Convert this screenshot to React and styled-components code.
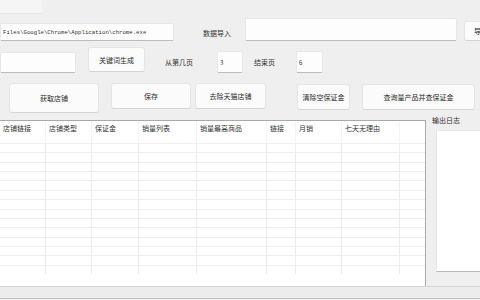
import styled, { createGlobalStyle } from "styled-components";

const Global = createGlobalStyle`
  html, body { margin: 0; padding: 0; background: #efefef; }
  body { font-family: "Noto Sans CJK SC", "Noto Sans", sans-serif; }
`;

const Window = styled.div`
  width: 480px;
  height: 300px;
  overflow: hidden;
  background: #efefef;
  color: #2a2a2a;
  font-size: 7px;
  position: relative;
`;

const TopStrip = styled.div`
  height: 13px;
  width: 42px;
  background: #f5f5f5;
  border-bottom: 1px solid #e6e6e6;
`;

const Row = styled.div`
  display: flex;
  align-items: ${({ align }) => align || "flex-start"};
  height: ${({ h }) => h}px;
  margin-top: ${({ mt }) => mt}px;
  white-space: nowrap;
`;

const Input = styled.div`
  flex: none;
  box-sizing: border-box;
  width: ${({ w }) => w}px;
  height: ${({ h }) => h}px;
  margin-left: ${({ ml }) => ml || 0}px;
  margin-top: ${({ mt }) => mt || 0}px;
  background: #fdfdfd;
  border: 1px solid #e8e8e8;
  border-bottom: 1px solid #bcbcbc;
  border-radius: 2px;
  display: flex;
  align-items: center;
  padding-left: 2px;
  overflow: hidden;
  font-size: 6px;
  color: #333;
`;

const PathText = styled.span`
  font-family: "Liberation Mono", "DejaVu Sans Mono", monospace;
  font-size: 5.7px;
  color: #333;
`;

const Label = styled.div`
  flex: none;
  width: ${({ w }) => w}px;
  margin-left: ${({ ml }) => ml || 0}px;
  margin-top: ${({ mt }) => mt || 0}px;
  font-size: 7px;
  line-height: 10px;
  color: #333;
  align-self: ${({ self }) => self || "auto"};
`;

const Button = styled.div`
  flex: none;
  box-sizing: border-box;
  width: ${({ w }) => w}px;
  height: ${({ h }) => h}px;
  margin-left: ${({ ml }) => ml || 0}px;
  margin-top: ${({ mt }) => mt || 0}px;
  background: #fbfbfb;
  border: 1px solid #e5e5e5;
  border-bottom-color: #d4d4d4;
  border-radius: 3px;
  display: flex;
  align-items: center;
  justify-content: center;
  font-size: 7px;
  color: #2a2a2a;
  overflow: hidden;
`;

const Bottom = styled.div`
  display: flex;
  align-items: flex-start;
  margin-top: 7px;
`;

const Table = styled.div`
  flex: none;
  box-sizing: border-box;
  width: 426px;
  height: 167px;
  background: #fff;
  border: 1px solid #a9a9a9;
  border-left: none;
  overflow: hidden;
`;

const HeadRow = styled.div`
  display: flex;
  height: 22px;
`;

const HeadCell = styled.div`
  flex: none;
  box-sizing: border-box;
  width: ${({ w }) => w}px;
  padding-left: 3px;
  line-height: 15px;
  font-size: 7px;
  color: #333;
  border-right: 1px solid #f3f3f3;
`;

const BodyRow = styled.div`
  display: flex;
  height: 9.36px;
  box-sizing: border-box;
  border-top: 1px solid #eeeeee;
`;

const Cell = styled.div`
  flex: none;
  box-sizing: border-box;
  width: ${({ w }) => w}px;
  border-right: 1px solid #ececec;
`;

const LogPanel = styled.div`
  flex: none;
  margin-left: 6px;
  display: flex;
  flex-direction: column;
`;

const LogLabel = styled.div`
  font-size: 7px;
  line-height: 8px;
  color: #333;
  margin-top: -4px;
`;

const LogBox = styled.div`
  margin-top: 6px;
  margin-left: 4px;
  width: 60px;
  height: 142px;
  box-sizing: border-box;
  background: #fff;
  border: 1px solid #e6e6e6;
  border-bottom: 1px solid #b9b9b9;
`;

const Footer = styled.div`
  position: absolute;
  left: 0;
  right: 0;
  top: 286px;
  height: 11px;
  background: #ececec;
  border-top: 1px solid #d6d6d6;
  border-bottom: 1px solid #c4c4c4;
`;

const cols = [46, 46, 47, 58, 70, 29, 46, 58, 26];
const headers = ["店铺链接", "店铺类型", "保证金", "销量列表", "销量最高商品", "链接", "月销", "七天无理由", ""];
const rows = Array.from({ length: 14 });

export default function App() {
  return (
    <Window>
      <Global />
      <TopStrip />
      <Row h={23} mt={4} align="flex-end">
        <Input w={174} h={18}>
          <PathText>Files\Google\Chrome\Application\chrome.exe</PathText>
        </Input>
        <Label w={42} ml={29} self="center" mt={6}>数据导入</Label>
        <Input w={212} h={23} />
        <Button w={34} h={20} ml={7}>导入</Button>
      </Row>

      <Row h={26} mt={6}>
        <Input w={76} h={21} mt={5} />
        <Button w={57} h={25} ml={12}>关键词生成</Button>
        <Label w={52} ml={20} mt={10}>从第几页</Label>
        <Input w={26} h={22} mt={4}>3</Input>
        <Label w={42} ml={11} mt={10}>结束页</Label>
        <Input w={27} h={22} mt={4}>6</Input>
      </Row>

      <Row h={30} mt={10}>
        <Button w={90} h={30} ml={9}>获取店铺</Button>
        <Button w={80} h={26} ml={12}>保存</Button>
        <Button w={71} h={26} ml={4}>去除天猫店铺</Button>
        <Button w={53} h={26} ml={31} mt={1}>清除空保证金</Button>
        <Button w={113} h={26} ml={12} mt={1}>查询量产品并查保证金</Button>
      </Row>

      <Bottom>
        <Table>
          <HeadRow>
            {headers.map((h, i) => (
              <HeadCell key={i} w={cols[i]}>{h}</HeadCell>
            ))}
          </HeadRow>
          {rows.map((_, r) => (
            <BodyRow key={r}>
              {cols.map((w, i) => (
                <Cell key={i} w={w} />
              ))}
            </BodyRow>
          ))}
        </Table>
        <LogPanel>
          <LogLabel>输出日志</LogLabel>
          <LogBox />
        </LogPanel>
      </Bottom>
      <Footer />
    </Window>
  );
}
